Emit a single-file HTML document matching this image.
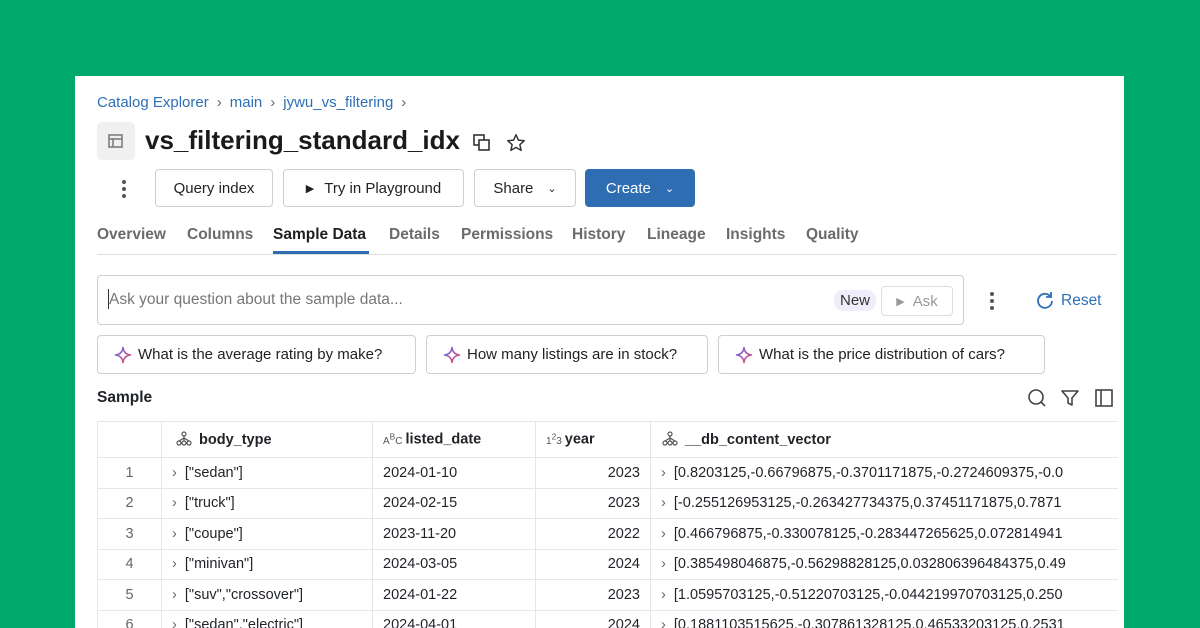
<!DOCTYPE html>
<html><head><meta charset="utf-8"><style>
*{box-sizing:border-box;margin:0;padding:0}
html,body{width:1200px;height:628px;overflow:hidden}
body{background:#00a86c;font-family:"Liberation Sans",sans-serif;position:relative;color:#1f2328}
.card{position:absolute;left:75px;top:76px;width:1049px;height:552px;background:#fff;overflow:hidden}
.abs{position:absolute}
.crumb{left:22px;top:18px;font-size:15px;color:#2f6fb5}
.crumb span.s{color:#666;margin:0 8px}
.title{left:70px;top:49px;font-size:26px;font-weight:bold;color:#1a1a1a}
.btn{position:absolute;top:93px;height:38px;border:1px solid #cfcfcf;border-radius:4px;font-size:15px;display:flex;align-items:center;justify-content:center;color:#222;background:#fff}
.tabs{left:22px;top:150px;font-size:15.5px;font-weight:bold;color:#6b6b6b}
.tabs span{position:absolute;white-space:nowrap}
.chip{position:absolute;top:259px;height:39px;border:1px solid #cfcfcf;border-radius:4px;font-size:15px;display:flex;align-items:center;padding-left:16px;color:#222}
table{position:absolute;left:22px;top:345px;border-collapse:collapse;font-size:14.5px;width:1040px}
td{border:1px solid #e6e6e6;height:30.5px;padding:0 10px;white-space:nowrap;overflow:hidden}
tr.h td{height:36px;font-weight:bold}
td.n{text-align:center;color:#666;width:64px}
.ic{display:inline-block;vertical-align:-3px;margin-right:6px}
</style></head><body>
<div class="card">
<div class="abs crumb">Catalog Explorer<span class="s">›</span>main<span class="s">›</span>jywu_vs_filtering<span class="s">›</span></div>
<div class="abs" style="left:22px;top:46px;width:38px;height:38px;background:#f0f0f0;border-radius:5px">
<svg width="38" height="38" viewBox="0 0 38 38"><rect x="12" y="13" width="13" height="12" fill="none" stroke="#777" stroke-width="1.5"/><line x1="12" y1="17" x2="25" y2="17" stroke="#777" stroke-width="1.5"/><line x1="16" y1="17" x2="16" y2="25" stroke="#777" stroke-width="1.5"/></svg></div>
<div class="abs title">vs_filtering_standard_idx</div>
<svg class="abs" style="left:397px;top:57px" width="20" height="20" viewBox="0 0 20 20"><rect x="2" y="2" width="10" height="10" fill="none" stroke="#333" stroke-width="1.6"/><rect x="7" y="7" width="10" height="10" fill="#fff" stroke="#333" stroke-width="1.6"/></svg>
<svg class="abs" style="left:430px;top:56px" width="22" height="22" viewBox="0 0 24 24"><path d="M12 3l2.7 5.9 6.3.6-4.8 4.3 1.4 6.3L12 16.8 6.4 20.1l1.4-6.3L3 9.5l6.3-.6z" fill="none" stroke="#333" stroke-width="1.6" stroke-linejoin="round"/></svg>
<div class="abs" style="left:47px;top:104px;width:4px"><div style="width:4px;height:4px;border-radius:2px;background:#555;margin-bottom:3px"></div><div style="width:4px;height:4px;border-radius:2px;background:#555;margin-bottom:3px"></div><div style="width:4px;height:4px;border-radius:2px;background:#555"></div></div>
<div class="btn" style="left:80px;width:118px">Query index</div>
<div class="btn" style="left:208px;width:181px"><span style="font-size:11px;margin-right:10px">▶</span>Try in Playground</div>
<div class="btn" style="left:399px;width:102px">Share<span style="margin-left:14px;font-size:11px">⌄</span></div>
<div class="btn" style="left:510px;width:110px;background:#2f6db3;border-color:#2f6db3;color:#fff">Create<span style="margin-left:14px;font-size:11px">⌄</span></div>
<div class="abs tabs">
<span style="left:0">Overview</span><span style="left:90px">Columns</span><span style="left:176px;color:#1f1f1f">Sample Data</span><span style="left:292px">Details</span><span style="left:364px">Permissions</span><span style="left:475px">History</span><span style="left:550px">Lineage</span><span style="left:629px">Insights</span><span style="left:709px">Quality</span></div>
<div class="abs" style="left:22px;top:178px;width:1020px;height:1px;background:#ddd"></div>
<div class="abs" style="left:198px;top:175px;width:96px;height:3px;background:#2f6db3"></div>
<div class="abs" style="left:22px;top:199px;width:867px;height:50px;border:1px solid #cfcfcf;border-radius:4px"></div>
<div class="abs" style="left:33px;top:213px;width:1px;height:20px;background:#333"></div>
<div class="abs" style="left:34px;top:215px;font-size:15.5px;color:#777">Ask your question about the sample data...</div>
<div class="abs" style="left:759px;top:214px;padding:2px 6px;border-radius:9px;background:#eeeefa;font-size:15px;color:#333">New</div>
<div class="abs" style="left:806px;top:210px;width:72px;height:30px;border:1px solid #ddd;border-radius:4px;font-size:15px;color:#999;display:flex;align-items:center;justify-content:center"><span style="font-size:11px;margin-right:8px">▶</span>Ask</div>
<div class="abs" style="left:915px;top:216px"><div style="width:4px;height:4px;border-radius:2px;background:#555;margin-bottom:3px"></div><div style="width:4px;height:4px;border-radius:2px;background:#555;margin-bottom:3px"></div><div style="width:4px;height:4px;border-radius:2px;background:#555"></div></div>
<svg class="abs" style="left:961px;top:215px" width="18" height="18" viewBox="0 0 18 18"><path d="M14.5 5.5A7 7 0 1 0 16 10" fill="none" stroke="#2f6fb5" stroke-width="1.8"/><path d="M15 1v5h-5" fill="none" stroke="#2f6fb5" stroke-width="1.8"/></svg>
<div class="abs" style="left:986px;top:216px;font-size:15.5px;color:#2f6fb5">Reset</div>
<div class="chip" style="left:22px;width:319px"><svg width="18" height="18" viewBox="0 0 18 18" style="margin-right:6px"><defs><linearGradient id="g" x1="0" y1="0" x2="1" y2="1"><stop offset="0" stop-color="#5b6ef5"/><stop offset="1" stop-color="#f0466e"/></linearGradient></defs><path d="M9 1.5Q9.8 8.2 16.5 9Q9.8 9.8 9 16.5Q8.2 9.8 1.5 9Q8.2 8.2 9 1.5Z" fill="none" stroke="url(#g)" stroke-width="1.6" stroke-linejoin="round"/></svg>What is the average rating by make?</div>
<div class="chip" style="left:351px;width:282px"><svg width="18" height="18" viewBox="0 0 18 18" style="margin-right:6px"><path d="M9 1.5Q9.8 8.2 16.5 9Q9.8 9.8 9 16.5Q8.2 9.8 1.5 9Q8.2 8.2 9 1.5Z" fill="none" stroke="url(#g)" stroke-width="1.6" stroke-linejoin="round"/></svg>How many listings are in stock?</div>
<div class="chip" style="left:643px;width:327px"><svg width="18" height="18" viewBox="0 0 18 18" style="margin-right:6px"><path d="M9 1.5Q9.8 8.2 16.5 9Q9.8 9.8 9 16.5Q8.2 9.8 1.5 9Q8.2 8.2 9 1.5Z" fill="none" stroke="url(#g)" stroke-width="1.6" stroke-linejoin="round"/></svg>What is the price distribution of cars?</div>
<div class="abs" style="left:22px;top:313px;font-size:15.5px;font-weight:bold">Sample</div>
<svg class="abs" style="left:952px;top:312px" width="20" height="20" viewBox="0 0 20 20"><circle cx="9" cy="9" r="7" fill="none" stroke="#444" stroke-width="1.6"/><line x1="14" y1="14" x2="18" y2="18" stroke="#444" stroke-width="1.6"/></svg>
<svg class="abs" style="left:985px;top:312px" width="20" height="20" viewBox="0 0 20 20"><path d="M2 3h16l-6 7v7l-4-2v-5z" fill="none" stroke="#444" stroke-width="1.6" stroke-linejoin="round"/></svg>
<svg class="abs" style="left:1019px;top:312px" width="20" height="20" viewBox="0 0 20 20"><rect x="2" y="2" width="16" height="16" fill="none" stroke="#444" stroke-width="1.6"/><line x1="7" y1="2" x2="7" y2="18" stroke="#444" stroke-width="1.6"/></svg>
<table>
<tr class="h"><td class="n"></td><td style="width:211px;padding-left:13px"><svg class="ic" width="18" height="16" viewBox="0 0 18 16"><g fill="none" stroke="#555" stroke-width="1.2"><circle cx="9" cy="3" r="2"/><circle cx="4" cy="12" r="2"/><circle cx="9" cy="12" r="2"/><circle cx="14" cy="12" r="2"/><path d="M9 5v5M9 7L4 10M9 7l5 3"/></g></svg>body_type</td><td style="width:163px"><span style="font-size:10px;font-weight:normal;color:#555;margin-right:3px">A<sup>B</sup>C</span>listed_date</td><td style="width:115px"><span style="font-size:10px;font-weight:normal;color:#555;margin-right:3px">1<sup>2</sup>3</span>year</td><td><svg class="ic" width="18" height="16" viewBox="0 0 18 16"><g fill="none" stroke="#555" stroke-width="1.2"><circle cx="9" cy="3" r="2"/><circle cx="4" cy="12" r="2"/><circle cx="9" cy="12" r="2"/><circle cx="14" cy="12" r="2"/><path d="M9 5v5M9 7L4 10M9 7l5 3"/></g></svg>__db_content_vector</td></tr>
<tr><td class="n">1</td><td><span style="color:#666">›</span>&nbsp; ["sedan"]</td><td>2024-01-10</td><td style="text-align:right">2023</td><td><span style="color:#666">›</span>&nbsp; [0.8203125,-0.66796875,-0.3701171875,-0.2724609375,-0.0</td></tr>
<tr><td class="n">2</td><td><span style="color:#666">›</span>&nbsp; ["truck"]</td><td>2024-02-15</td><td style="text-align:right">2023</td><td><span style="color:#666">›</span>&nbsp; [-0.255126953125,-0.263427734375,0.37451171875,0.7871</td></tr>
<tr><td class="n">3</td><td><span style="color:#666">›</span>&nbsp; ["coupe"]</td><td>2023-11-20</td><td style="text-align:right">2022</td><td><span style="color:#666">›</span>&nbsp; [0.466796875,-0.330078125,-0.283447265625,0.072814941</td></tr>
<tr><td class="n">4</td><td><span style="color:#666">›</span>&nbsp; ["minivan"]</td><td>2024-03-05</td><td style="text-align:right">2024</td><td><span style="color:#666">›</span>&nbsp; [0.385498046875,-0.56298828125,0.032806396484375,0.49</td></tr>
<tr><td class="n">5</td><td><span style="color:#666">›</span>&nbsp; ["suv","crossover"]</td><td>2024-01-22</td><td style="text-align:right">2023</td><td><span style="color:#666">›</span>&nbsp; [1.0595703125,-0.51220703125,-0.044219970703125,0.250</td></tr>
<tr><td class="n">6</td><td><span style="color:#666">›</span>&nbsp; ["sedan","electric"]</td><td>2024-04-01</td><td style="text-align:right">2024</td><td><span style="color:#666">›</span>&nbsp; [0.1881103515625,-0.307861328125,0.46533203125,0.2531</td></tr>
</table>
<div class="abs" style="left:1043px;top:345px;width:10px;height:300px;background:#fff"></div>
</div>
</body></html>
